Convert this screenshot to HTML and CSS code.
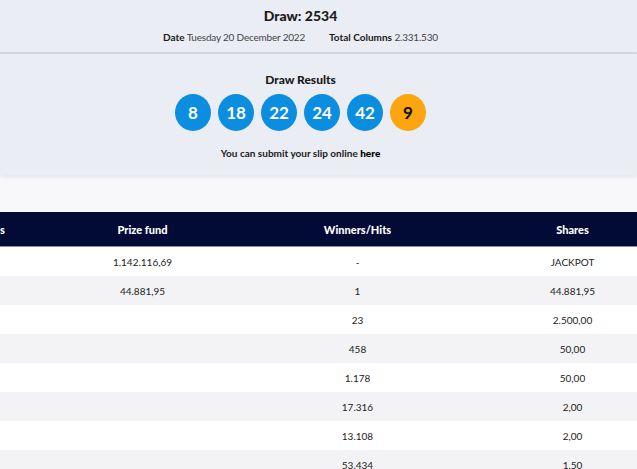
FILE: index.html
```html
<!DOCTYPE html>
<html lang="en">
<head>
    <meta charset="UTF-8">
    <meta name="viewport" content="width=device-width, initial-scale=1.0">
    <title>Draw 2534 Results</title>
    <link rel="stylesheet" href="styles.css">
</head>
<body>
    <header class="draw-info">
        <h1>Draw: 2534</h1>
        <div class="draw-meta">
            <span><strong>Date</strong> Tuesday 20 December 2022</span>
            <span><strong>Total Columns</strong> 2.331.530</span>
        </div>
    </header>

    <section class="results">
        <h2>Draw Results</h2>
        <div class="balls">
            <span class="ball">8</span>
            <span class="ball">18</span>
            <span class="ball">22</span>
            <span class="ball">24</span>
            <span class="ball">42</span>
            <span class="ball bonus">9</span>
        </div>
        <p class="slip">You can submit your slip online <a href="#">here</a></p>
    </section>

    <div class="spacer"></div>

    <div class="table-scroll">
        <table class="prizes">
            <thead>
                <tr>
                    <th class="col-cat">Categories</th>
                    <th>Prize fund</th>
                    <th>Winners/Hits</th>
                    <th>Shares</th>
                </tr>
            </thead>
            <tbody>
                <tr><td>6</td><td>1.142.116,69</td><td>-</td><td>JACKPOT</td></tr>
                <tr><td>5+1</td><td>44.881,95</td><td>1</td><td>44.881,95</td></tr>
                <tr><td>5</td><td></td><td>23</td><td>2.500,00</td></tr>
                <tr><td>4+1</td><td></td><td>458</td><td>50,00</td></tr>
                <tr><td>4</td><td></td><td>1.178</td><td>50,00</td></tr>
                <tr><td>3+1</td><td></td><td>17.316</td><td>2,00</td></tr>
                <tr><td>3</td><td></td><td>13.108</td><td>2,00</td></tr>
                <tr><td>2+1</td><td></td><td>53.434</td><td>1,50</td></tr>
            </tbody>
        </table>
    </div>
</body>
</html>
```

FILE: styles.css
```css
:root {
    --color-panel: #eaedf4;
    --color-page: #f8f8fa;
    --color-navy: #020b36;
    --color-blue: #0b8de0;
    --color-orange: #fca60f;
    --color-text: #1a1a1a;
    --color-row-alt: #f3f3f5;
}

body {
    margin: 0;
    font-family: 'Lato', 'Open Sans', sans-serif;
    background-color: var(--color-page);
    color: var(--color-text);
    overflow: hidden;
}

/* Draw number + date header */
.draw-info {
    background-color: var(--color-panel);
    text-align: center;
    height: 54px;
    box-sizing: border-box;
    padding: 7px 36px 0 0;
    border-bottom: 2px solid #d3d6de;
}

.draw-info h1 {
    margin: 0;
    font-size: 14px;
    font-weight: 900;
    line-height: 17px;
}

.draw-meta {
    display: flex;
    justify-content: center;
    gap: 24px;
    margin-top: 7px;
    font-size: 10px;
    color: #444;
    letter-spacing: -0.2px;
}

.draw-meta strong {
    font-weight: 700;
    color: var(--color-text);
    letter-spacing: 0;
}

/* Winning numbers */
.results {
    background-color: var(--color-panel);
    text-align: center;
    height: 121px;
    box-sizing: border-box;
    padding: 18px 36px 0 0;
    box-shadow: 0 2px 4px rgba(0, 0, 0, 0.08);
}

.results h2 {
    margin: 0;
    font-size: 12px;
    font-weight: 900;
    line-height: 15px;
}

.balls {
    display: flex;
    justify-content: center;
    gap: 7px;
    margin-top: 7px;
}

.ball {
    width: 36px;
    height: 37px;
    border-radius: 50%;
    background-color: var(--color-blue);
    color: #fff;
    font-size: 17px;
    font-weight: 700;
    display: flex;
    align-items: center;
    justify-content: center;
}

.ball.bonus {
    background-color: var(--color-orange);
    color: #111;
}

.slip {
    margin: 16px 0 0;
    font-size: 10px;
    font-weight: 700;
}

.slip a {
    color: #000;
    font-weight: 900;
    text-decoration: none;
}

.spacer {
    height: 37px;
}

/* Prize breakdown, scrolled sideways */
.table-scroll {
    overflow: hidden;
}

.prizes {
    border-collapse: collapse;
    margin-left: -78px;
    table-layout: fixed;
    width: 758px;
    font-size: 10px;
}

.prizes th {
    background-color: var(--color-navy);
    color: #fff;
    font-size: 11px;
    font-weight: 900;
    height: 34px;
    padding: 0;
    width: 215px;
    border-bottom: 1px solid #8a90a4;
}

.prizes th.col-cat {
    width: 113px;
}

.prizes td {
    height: 29px;
    padding: 0;
    text-align: center;
    color: #222;
}

.prizes tbody tr {
    background-color: #fff;
}

.prizes tbody tr:nth-child(even) {
    background-color: var(--color-row-alt);
}
```
